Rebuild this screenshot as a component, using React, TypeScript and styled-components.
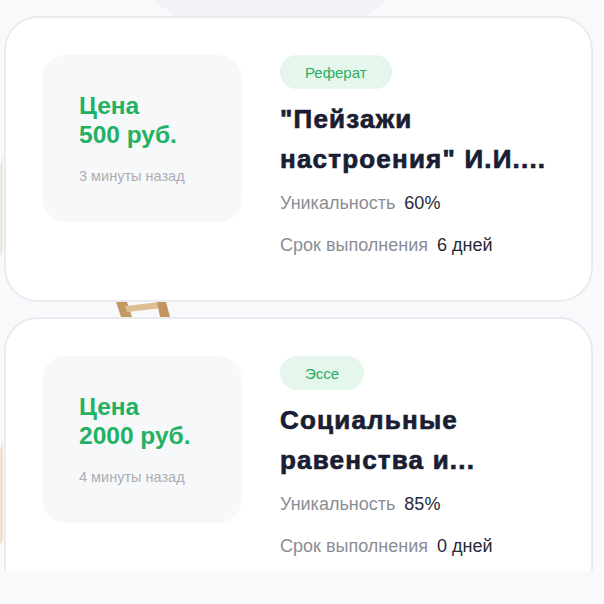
import { createGlobalStyle, styled } from "styled-components";

const GlobalStyle = createGlobalStyle`
  html, body {
    margin: 0;
    padding: 0;
    background: #f8f9fb;
    font-family: "Liberation Sans", Arial, sans-serif;
  }
  * {
    box-sizing: border-box;
  }
`;

type Order = {
  type: string;
  title: string;
  price: number;
  ago: string;
  uniq: number;
  days: number;
};

const orders: Order[] = [
  {
    type: "Реферат",
    title: "\"Пейзажи настроения\" И.И....",
    price: 500,
    ago: "3 минуты назад",
    uniq: 60,
    days: 6,
  },
  {
    type: "Эссе",
    title: "Социальные равенства и...",
    price: 2000,
    ago: "4 минуты назад",
    uniq: 85,
    days: 0,
  },
];

function App() {
  return (
    <>
      <GlobalStyle />
      <Page>
        <Backdrop aria-hidden>
          <Blob />
          {/* bits of the easel picture that peek out between the cards */}
          <svg width="604" height="604" viewBox="0 0 604 604">
            <path d="M116 302 L127 302 L132 317 L121 317 Z" fill="#c49863" />
            <path d="M125 306 L160 302 L162 308 L127 312 Z" fill="#ddbf92" />
            <path d="M157 302 L166 302 L170 317 L160 317 Z" fill="#c29561" />
            <path d="M0 165 L3 155 L3 250 L0 258 Z" fill="#ecebe2" />
            <path d="M0 450 L3 440 L3 540 L0 545 Z" fill="#efe3cf" />
          </svg>
        </Backdrop>
        <List>
          {orders.map((o) => (
            <Card key={o.title}>
              <PriceBox>
                <Price>
                  Цена
                  <br />
                  {o.price} руб.
                </Price>
                <Ago>{o.ago}</Ago>
              </PriceBox>
              <Info>
                <Badge>{o.type}</Badge>
                <Title>{o.title}</Title>
                <Meta>
                  <MetaRow>
                    <Label>Уникальность</Label>
                    <Value>{o.uniq}%</Value>
                  </MetaRow>
                  <MetaRow>
                    <Label>Срок выполнения</Label>
                    <Value>{o.days} дней</Value>
                  </MetaRow>
                </Meta>
              </Info>
            </Card>
          ))}
        </List>
      </Page>
    </>
  );
}

export default App;

const Page = styled.div`
  position: relative;
  width: 604px;
  height: 604px;
  overflow: hidden;
  background: #f8f9fb;
`;

const Backdrop = styled.div`
  position: absolute;
  inset: 0;
  pointer-events: none;

  svg {
    position: absolute;
    left: 0;
    top: 0;
  }
`;

const Blob = styled.div`
  position: absolute;
  left: 98px;
  top: -300px;
  width: 345px;
  height: 345px;
  border-radius: 50%;
  background: #f2f3f6;
`;

const List = styled.div`
  position: relative;
  height: 571px;
  overflow: hidden;
  padding: 16px 11px 0 4px;
  display: flex;
  flex-direction: column;
  gap: 15px;
`;

const Card = styled.div`
  flex-shrink: 0;
  display: flex;
  gap: 38px;
  padding: 37px 36px 44px 36px;
  background: #ffffff;
  border: 2px solid #e9ebf0;
  border-radius: 34px;
`;

const PriceBox = styled.div`
  flex-shrink: 0;
  width: 200px;
  height: 167px;
  padding: 36px 20px 0 37px;
  background: #f7f8fa;
  border-radius: 24px;
`;

const Price = styled.div`
  font-size: 24.5px;
  line-height: 29px;
  font-weight: 700;
  color: #1fb263;
`;

const Ago = styled.div`
  margin-top: 19px;
  font-size: 14.5px;
  color: #abadb3;
`;

const Info = styled.div`
  display: flex;
  flex-direction: column;
  align-items: flex-start;
`;

const Badge = styled.span`
  display: inline-flex;
  align-items: center;
  height: 34px;
  padding: 0 25px;
  border-radius: 17px;
  background: #e5f6ed;
  color: #2aae66;
  font-size: 15px;
`;

const Title = styled.h2`
  margin: 10px 0 0;
  width: 290px;
  font-size: 26px;
  line-height: 40px;
  font-weight: 900;
  letter-spacing: 1.2px;
  -webkit-text-stroke: 0.7px #1b1d33;
  color: #1b1d33;
`;

const Meta = styled.div`
  margin-top: 14px;
  display: flex;
  flex-direction: column;
  gap: 21px;
`;

const MetaRow = styled.div`
  display: flex;
  gap: 9px;
  font-size: 18px;
  line-height: 21px;
`;

const Label = styled.span`
  color: #8b8d95;
`;

const Value = styled.span`
  color: #272937;
`;
